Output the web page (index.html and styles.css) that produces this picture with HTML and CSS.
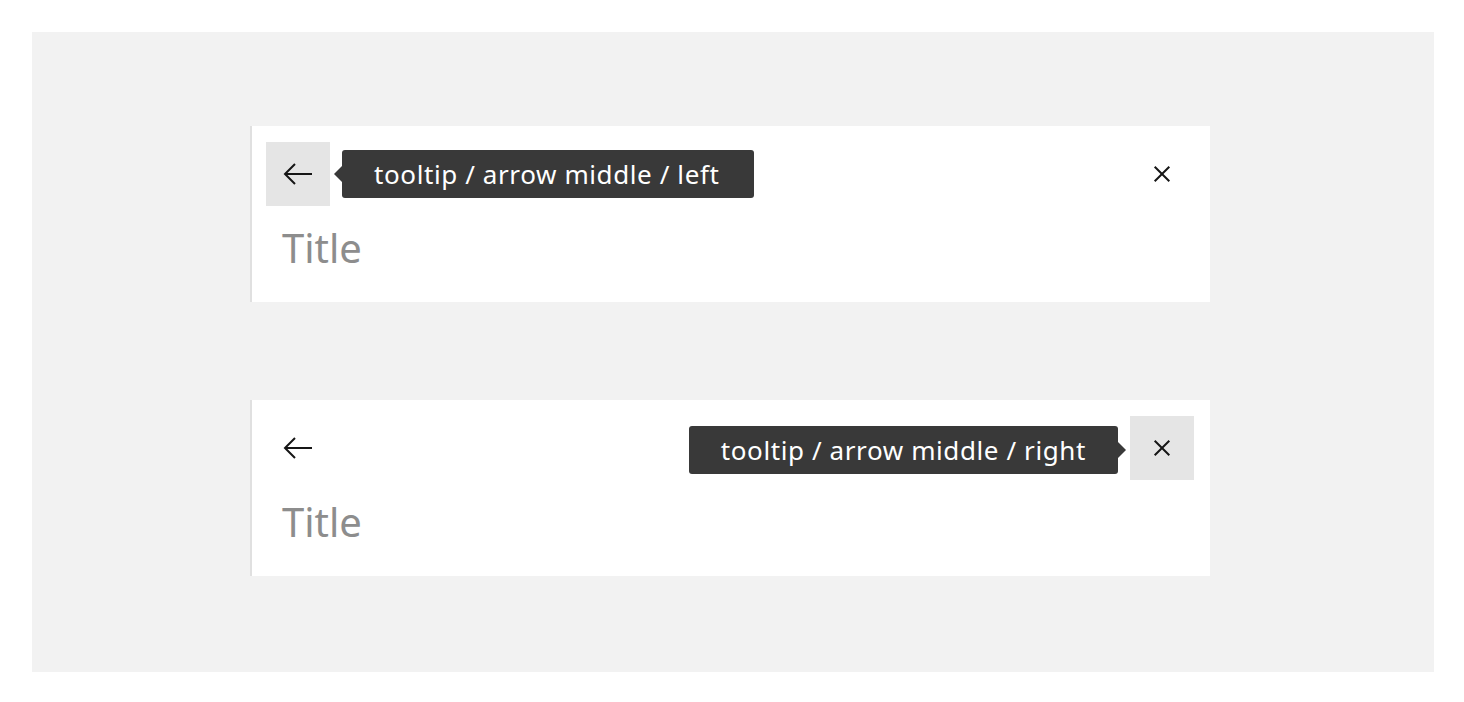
FILE: index.html
```html
<!DOCTYPE html>
<html>
<head>
<meta charset="utf-8">
<link rel="stylesheet" href="styles.css">
</head>
<body>
<div class="panel">
  <div class="card">
    <div class="header">
      <div class="icon-btn active">
        <svg width="32" height="32" viewBox="0 0 32 32"><path d="M3 16h27M13 6L3 16l10 10" fill="none" stroke="#161616" stroke-width="2"/></svg>
      </div>
      <div class="tooltip tip-left">tooltip / arrow middle / left</div>
      <div class="spacer"></div>
      <div class="icon-btn">
        <svg width="32" height="32" viewBox="0 0 32 32"><path d="M8.7 8.7l14.6 14.6M23.3 8.7L8.7 23.3" fill="none" stroke="#161616" stroke-width="2"/></svg>
      </div>
    </div>
    <div class="title">Title</div>
  </div>
  <div class="card">
    <div class="header">
      <div class="icon-btn">
        <svg width="32" height="32" viewBox="0 0 32 32"><path d="M3 16h27M13 6L3 16l10 10" fill="none" stroke="#161616" stroke-width="2"/></svg>
      </div>
      <div class="spacer"></div>
      <div class="tooltip tip-right">tooltip / arrow middle / right</div>
      <div class="icon-btn active">
        <svg width="32" height="32" viewBox="0 0 32 32"><path d="M8.7 8.7l14.6 14.6M23.3 8.7L8.7 23.3" fill="none" stroke="#161616" stroke-width="2"/></svg>
      </div>
    </div>
    <div class="title">Title</div>
  </div>
</div>
</body>
</html>
```
FILE: styles.css
```css
html, body {
  margin: 0;
  padding: 0;
  background: #ffffff;
}
body {
  padding: 32px 30px 30px 32px;
  font-family: "Noto Sans", "Open Sans", sans-serif;
}
.panel {
  width: 1402px;
  height: 640px;
  box-sizing: border-box;
  background: #f2f2f2;
  padding: 94px 0 0 218px;
  display: flex;
  flex-direction: column;
  gap: 98px;
}
.card {
  width: 960px;
  height: 176px;
  box-sizing: border-box;
  background: #ffffff;
  border-left: 2px solid #e0e0e0;
  padding: 16px 16px 0 14px;
}
.header {
  display: flex;
  align-items: center;
  height: 64px;
}
.spacer {
  flex: 1;
}
.icon-btn {
  width: 64px;
  height: 64px;
  display: flex;
  align-items: center;
  justify-content: center;
}
.icon-btn.active {
  background: #e5e5e5;
}
.tooltip {
  position: relative;
  height: 48px;
  box-sizing: border-box;
  background: #393939;
  color: #ffffff;
  border-radius: 3px;
  font-size: 26px;
  letter-spacing: 0.6px;
  line-height: 48px;
  white-space: nowrap;
}
.tip-left {
  margin-left: 12px;
  padding: 0 35px 0 32px;
}
.tip-right {
  margin: 4px 12px 0 0;
  padding: 0 32px 0 32px;
}
.tip-left::before,
.tip-right::after {
  content: "";
  position: absolute;
  top: 16px;
  width: 0;
  height: 0;
  border-top: 8px solid transparent;
  border-bottom: 8px solid transparent;
}
.tip-left::before {
  left: -8px;
  border-right: 8px solid #393939;
}
.tip-right::after {
  right: -8px;
  border-left: 8px solid #393939;
}
.title {
  margin-left: 16px;
  margin-top: 16px;
  font-size: 40px;
  line-height: 52px;
  color: #8d8d8d;
}
```
